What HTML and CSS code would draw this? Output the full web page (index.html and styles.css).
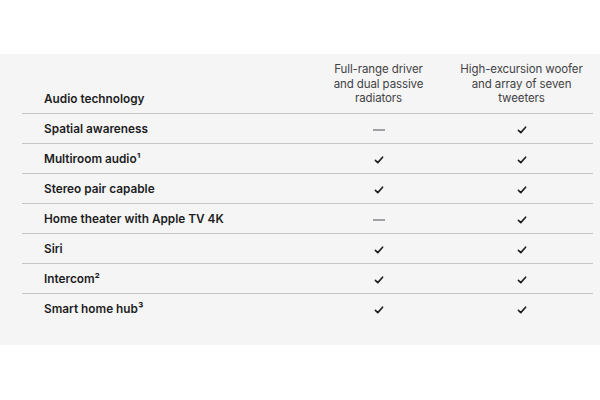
FILE: index.html
```html
<!DOCTYPE html>
<html>
<head>
<meta charset="utf-8">
<link rel="stylesheet" href="styles.css">
</head>
<body>
<section class="panel">
  <table class="compare">
    <thead>
      <tr>
        <th class="label">Audio technology</th>
        <th class="model">Full-range driver<br>and dual passive<br>radiators</th>
        <th class="model">High-excursion woofer<br>and array of seven<br>tweeters</th>
      </tr>
    </thead>
    <tbody>
      <tr><td class="label">Spatial awareness</td><td><span class="dash"></span></td><td><svg class="check" viewBox="0 0 10 8"><path d="M1.4 4.4 L3.8 6.6 L8.6 1.2"/></svg></td></tr>
      <tr><td class="label">Multiroom audio<span class="sup">¹</span></td><td><svg class="check" viewBox="0 0 10 8"><path d="M1.4 4.4 L3.8 6.6 L8.6 1.2"/></svg></td><td><svg class="check" viewBox="0 0 10 8"><path d="M1.4 4.4 L3.8 6.6 L8.6 1.2"/></svg></td></tr>
      <tr><td class="label">Stereo pair capable</td><td><svg class="check" viewBox="0 0 10 8"><path d="M1.4 4.4 L3.8 6.6 L8.6 1.2"/></svg></td><td><svg class="check" viewBox="0 0 10 8"><path d="M1.4 4.4 L3.8 6.6 L8.6 1.2"/></svg></td></tr>
      <tr><td class="label">Home theater with Apple TV 4K</td><td><span class="dash"></span></td><td><svg class="check" viewBox="0 0 10 8"><path d="M1.4 4.4 L3.8 6.6 L8.6 1.2"/></svg></td></tr>
      <tr><td class="label">Siri</td><td><svg class="check" viewBox="0 0 10 8"><path d="M1.4 4.4 L3.8 6.6 L8.6 1.2"/></svg></td><td><svg class="check" viewBox="0 0 10 8"><path d="M1.4 4.4 L3.8 6.6 L8.6 1.2"/></svg></td></tr>
      <tr><td class="label">Intercom<span class="sup">²</span></td><td><svg class="check" viewBox="0 0 10 8"><path d="M1.4 4.4 L3.8 6.6 L8.6 1.2"/></svg></td><td><svg class="check" viewBox="0 0 10 8"><path d="M1.4 4.4 L3.8 6.6 L8.6 1.2"/></svg></td></tr>
      <tr><td class="label">Smart home hub<span class="sup">³</span></td><td><svg class="check" viewBox="0 0 10 8"><path d="M1.4 4.4 L3.8 6.6 L8.6 1.2"/></svg></td><td><svg class="check" viewBox="0 0 10 8"><path d="M1.4 4.4 L3.8 6.6 L8.6 1.2"/></svg></td></tr>
    </tbody>
  </table>
</section>
</body>
</html>
```

FILE: styles.css
```css
html, body {
  margin: 0;
  padding: 0;
  background: #ffffff;
}
body {
  font-family: Inter, "Noto Sans", "Liberation Sans", sans-serif;
  color: #1d1d1f;
  padding-top: 54px;
}
.panel {
  background: #f5f5f5;
  height: 291px;
  padding: 8px 7px 0 22px;
  box-sizing: border-box;
}
.compare {
  width: 571px;
  border-collapse: collapse;
  table-layout: fixed;
}
.compare th, .compare td {
  padding: 0;
  text-align: center;
  vertical-align: middle;
}
.compare th.label, .compare td.label {
  width: 285px;
  text-align: left;
  padding-left: 22px;
  box-sizing: border-box;
}
.compare thead th {
  vertical-align: bottom;
  padding-bottom: 7px;
  border-bottom: 1px solid #c6c6c6;
}
.compare th.label {
  font-size: 11.8px;
  font-weight: 600;
  line-height: 14px;
  padding-bottom: 7px;
}
.compare th.model {
  font-size: 11.5px;
  font-weight: 400;
  line-height: 14.7px;
  color: #424245;
  letter-spacing: -0.1px;
}
.compare tbody td {
  height: 29px;
  border-bottom: 1px solid #c6c6c6;
}
.compare tbody tr:last-child td {
  border-bottom: none;
}
.compare td.label {
  font-size: 11.8px;
  font-weight: 600;
}
.sup {
  font-size: 11.8px;
}
.check {
  width: 10px;
  height: 8px;
  display: inline-block;
  vertical-align: middle;
}
.check path {
  fill: none;
  stroke: #1d1d1f;
  stroke-width: 1.6;
  stroke-linecap: round;
  stroke-linejoin: round;
}
.dash {
  display: inline-block;
  width: 12px;
  height: 1.5px;
  background: #a1a1a6;
  vertical-align: middle;
}
```
